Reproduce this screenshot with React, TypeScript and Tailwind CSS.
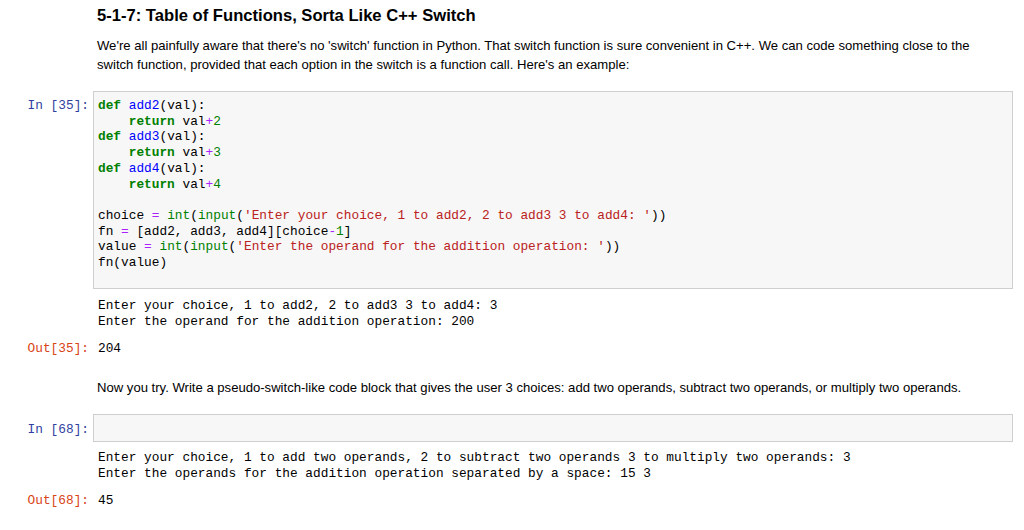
import React from 'react';

const mono = "font-['Liberation_Mono','DejaVu_Sans_Mono',monospace] text-[12.8px]";
const sans = "font-['Liberation_Sans','Helvetica',Arial,sans-serif]";

const Kw: React.FC<{ children: React.ReactNode }> = ({ children }) => (
  <span className="font-bold text-[#008000]">{children}</span>
);
const Fn: React.FC<{ children: React.ReactNode }> = ({ children }) => (
  <span className="text-[#0000ff]">{children}</span>
);
const Op: React.FC<{ children: React.ReactNode }> = ({ children }) => (
  <span className="text-[#aa22ff]">{children}</span>
);
const Num: React.FC<{ children: React.ReactNode }> = ({ children }) => (
  <span className="text-[#008000]">{children}</span>
);
const Str: React.FC<{ children: React.ReactNode }> = ({ children }) => (
  <span className="text-[#ba2121]">{children}</span>
);
const Bi: React.FC<{ children: React.ReactNode }> = ({ children }) => (
  <span className="text-[#008000]">{children}</span>
);

const Prompt: React.FC<{ kind: 'in' | 'out'; n: number }> = ({ kind, n }) => (
  <div
    className={`w-[93px] shrink-0 pr-[4px] text-right ${mono} ${
      kind === 'in' ? 'text-[#303f9f]' : 'text-[#d84315]'
    }`}
  >
    {kind === 'in' ? `In [${n}]:` : `Out[${n}]:`}
  </div>
);

const App: React.FC = () => {
  return (
    <div className="min-h-screen bg-white pt-[6px] pr-[11px] text-black">
      {/* markdown cell */}
      <div className={`pl-[97px] ${sans}`}>
        <h3 className="text-[16.6px] leading-[20px] font-bold">
          5-1-7: Table of Functions, Sorta Like C++ Switch
        </h3>
        <p className="mt-[10px] text-[13.1px] leading-[19px]">
          We're all painfully aware that there's no 'switch' function in Python. That switch function is sure
          convenient in C++. We can code something close to the
          <br />
          switch function, provided that each option in the switch is a function call. Here's an example:
        </p>
      </div>

      {/* code cell 35 */}
      <div className="mt-[17px] flex leading-[15.7px]">
        <div className="pt-[7px]">
          <Prompt kind="in" n={35} />
        </div>
        <pre
          className={`flex-1 border border-[#cfcfcf] bg-[#f7f7f7] px-[4px] pt-[6px] pb-[2px] leading-[15.7px] ${mono}`}
        >
          <Kw>def</Kw> <Fn>add2</Fn>(val):{'\n'}
          {'    '}<Kw>return</Kw> val<Op>+</Op><Num>2</Num>{'\n'}
          <Kw>def</Kw> <Fn>add3</Fn>(val):{'\n'}
          {'    '}<Kw>return</Kw> val<Op>+</Op><Num>3</Num>{'\n'}
          <Kw>def</Kw> <Fn>add4</Fn>(val):{'\n'}
          {'    '}<Kw>return</Kw> val<Op>+</Op><Num>4</Num>{'\n'}
          {'\n'}
          choice <Op>=</Op> <Bi>int</Bi>(<Bi>input</Bi>(<Str>'Enter your choice, 1 to add2, 2 to add3 3 to add4: '</Str>)){'\n'}
          fn <Op>=</Op> [add2, add3, add4][choice<Op>-</Op><Num>1</Num>]{'\n'}
          value <Op>=</Op> <Bi>int</Bi>(<Bi>input</Bi>(<Str>'Enter the operand for the addition operation: '</Str>)){'\n'}
          fn(value){'\n'}
          {' '}
        </pre>
      </div>

      <div className="mt-[9px] flex">
        <div className="w-[93px] shrink-0" />
        <pre className={`pl-[5px] leading-[16px] ${mono}`}>
          Enter your choice, 1 to add2, 2 to add3 3 to add4: 3{'\n'}
          Enter the operand for the addition operation: 200
        </pre>
      </div>

      <div className="mt-[11px] flex leading-[16px]">
        <Prompt kind="out" n={35} />
        <pre className={`pl-[5px] ${mono}`}>204</pre>
      </div>

      {/* markdown cell */}
      <p className={`mt-[21px] pl-[97px] text-[13.1px] leading-[19px] ${sans}`}>
        Now you try. Write a pseudo-switch-like code block that gives the user 3 choices: add two operands,
        subtract two operands, or multiply two operands.
      </p>

      {/* code cell 68 */}
      <div className="mt-[17px] flex leading-[16px]">
        <div className="pt-[8px]">
          <Prompt kind="in" n={68} />
        </div>
        <div className="h-[28px] flex-1 border border-[#cfcfcf] bg-[#f7f7f7]" />
      </div>

      <div className="mt-[8px] flex">
        <div className="w-[93px] shrink-0" />
        <pre className={`pl-[5px] leading-[16px] ${mono}`}>
          Enter your choice, 1 to add two operands, 2 to subtract two operands 3 to multiply two operands: 3{'\n'}
          Enter the operands for the addition operation separated by a space: 15 3
        </pre>
      </div>

      <div className="mt-[11px] flex leading-[16px]">
        <Prompt kind="out" n={68} />
        <pre className={`pl-[5px] ${mono}`}>45</pre>
      </div>
    </div>
  );
};

export default App;
